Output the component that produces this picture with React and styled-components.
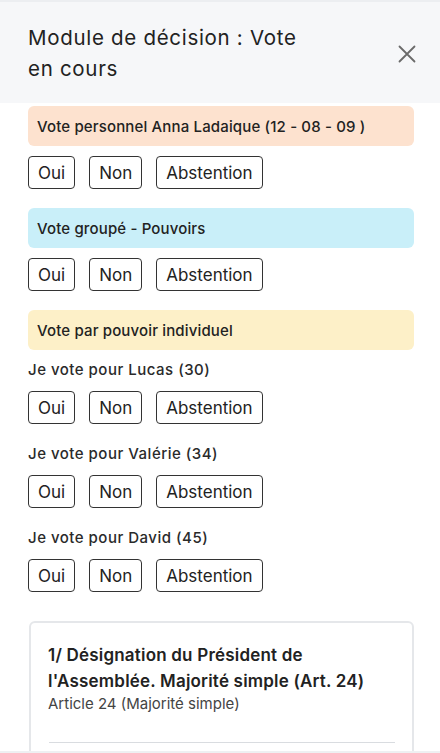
import React from "react";
import styled, { createGlobalStyle } from "styled-components";

const GlobalStyle = createGlobalStyle`
  html, body {
    margin: 0;
    padding: 0;
    background: #fff;
  }
  body {
    font-family: Inter, "Noto Sans", sans-serif;
    color: #222;
    -webkit-font-smoothing: antialiased;
  }
`;

const sections = [
  { label: "Vote personnel Anna Ladaique (12 - 08 - 09 )", tone: "#fde2cf", votes: [null] },
  { label: "Vote groupé - Pouvoirs", tone: "#c9eff9", votes: [null] },
  {
    label: "Vote par pouvoir individuel",
    tone: "#fdf0c8",
    votes: ["Je vote pour Lucas (30)", "Je vote pour Valérie (34)", "Je vote pour David (45)"],
  },
];

export default function App() {
  return (
    <Page>
      <GlobalStyle />
      <Header>
        <Title>Module de décision : Vote en cours</Title>
        <Close aria-label="Fermer">
          <svg width="18" height="18" viewBox="0 0 18 18" fill="none">
            <path d="M1.5 1.5L16.5 16.5M16.5 1.5L1.5 16.5" stroke="#6a6a6a" strokeWidth="1.8" strokeLinecap="round" />
          </svg>
        </Close>
      </Header>
      <Content>
        {sections.map((s) => (
          <Section key={s.label}>
            <Banner tone={s.tone}>{s.label}</Banner>
            {s.votes.map((v, i) => (
              <VoteBlock key={i}>
                {v && <Label>{v}</Label>}
                <Buttons>
                  <Choice>Oui</Choice>
                  <Choice>Non</Choice>
                  <Choice>Abstention</Choice>
                </Buttons>
              </VoteBlock>
            ))}
          </Section>
        ))}
        <Card>
          <CardTitle>1/ Désignation du Président de l'Assemblée. Majorité simple (Art. 24)</CardTitle>
          <CardSub>Article 24 (Majorité simple)</CardSub>
          <Divider />
        </Card>
      </Content>
      <Footer />
    </Page>
  );
}

const Page = styled.div`
  position: relative;
  height: 753px;
  overflow: hidden;
`;
const Header = styled.div`
  display: flex;
  align-items: center;
  justify-content: space-between;
  background: #f6f7f9;
  border-top: 2px solid #eceef1;
  padding: 20px 24px 20px 28px;
  height: 103px;
  box-sizing: border-box;
`;
const Title = styled.h2`
  margin: 0;
  width: 285px;
  font-size: 20.5px;
  font-weight: 400;
  letter-spacing: 0.7px;
  line-height: 31px;
  color: #222;
`;
const Close = styled.button`
  border: none;
  background: none;
  padding: 0;
  margin-top: 2px;
  display: flex;
  cursor: pointer;
`;
const Content = styled.div`
  padding: 3px 26px 0 28px;
`;
const Section = styled.div`
  display: flex;
  flex-direction: column;
  margin-bottom: 19px;
`;
const Banner = styled.div`
  background: ${({ tone }) => tone};
  border-radius: 6px;
  height: 40px;
  padding: 0 9px;
  display: flex;
  align-items: center;
  font-size: 15px;
  font-weight: 500;
  letter-spacing: 0.15px;
  color: #222;
`;
const VoteBlock = styled.div`
  margin-top: 10px;
  & + & {
    margin-top: 20px;
  }
`;
const Label = styled.div`
  font-size: 15px;
  font-weight: 500;
  letter-spacing: 0.5px;
  line-height: 20px;
  color: #2a2a2a;
  margin-bottom: 11px;
`;
const Buttons = styled.div`
  display: flex;
  gap: 14px;
`;
const Choice = styled.button`
  height: 33px;
  padding: 0 9px;
  border: 1px solid #333;
  border-radius: 4px;
  background: #fff;
  font-family: Inter, "Noto Sans", sans-serif;
  font-size: 17px;
  color: #222;
  cursor: pointer;
`;
const Card = styled.div`
  margin-top: 29px;
  margin-left: 1px;
  border: 2px solid #e5e7ea;
  border-radius: 6px;
  padding: 19px 17px 30px 17px;
`;
const CardTitle = styled.div`
  font-size: 17px;
  font-weight: 600;
  letter-spacing: 0.2px;
  line-height: 26px;
  color: #222;
  width: 330px;
`;
const CardSub = styled.div`
  font-size: 15px;
  line-height: 20px;
  color: #444;
`;
const Divider = styled.div`
  height: 1px;
  background: #d9dce0;
  margin: 28px 0 0 1px;
  width: 346px;
`;
const Footer = styled.div`
  position: absolute;
  left: 0;
  right: 0;
  bottom: 0;
  height: 2px;
  background: #eef0f2;
`;
